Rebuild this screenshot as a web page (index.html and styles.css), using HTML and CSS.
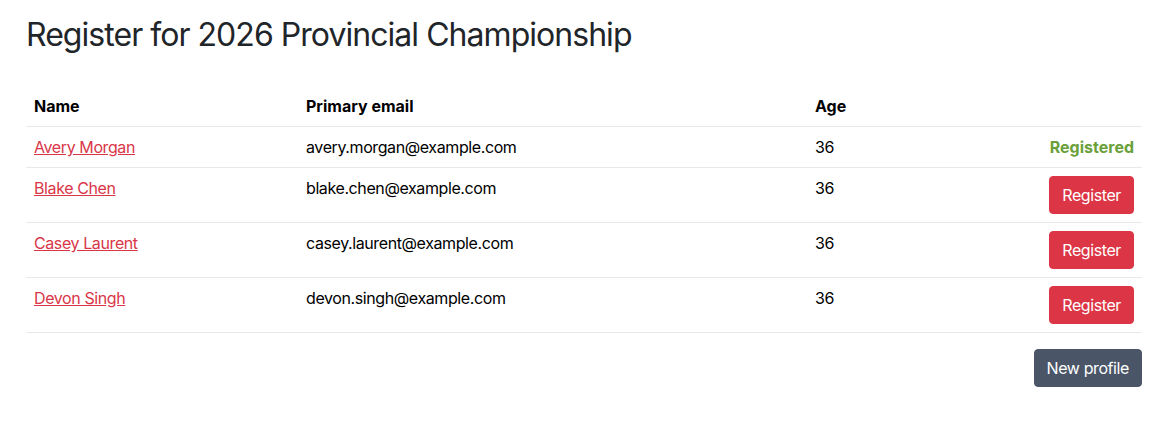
FILE: index.html
```html
<!DOCTYPE html>
<html lang="en">
<head>
    <meta charset="UTF-8">
    <meta name="viewport" content="width=device-width, initial-scale=1.0">
    <title>Register</title>
    <link rel="stylesheet" href="styles.css">
</head>
<body>
    <div class="container">
        <h1>Register for 2026 Provincial Championship</h1>
        <table class="table">
            <thead>
                <tr>
                    <th class="col-name">Name</th>
                    <th class="col-email">Primary email</th>
                    <th class="col-age">Age</th>
                    <th></th>
                </tr>
            </thead>
            <tbody>
                <tr>
                    <td><a href="#">Avery Morgan</a></td>
                    <td>avery.morgan@example.com</td>
                    <td>36</td>
                    <td class="action"><span class="registered">Registered</span></td>
                </tr>
                <tr>
                    <td><a href="#">Blake Chen</a></td>
                    <td>blake.chen@example.com</td>
                    <td>36</td>
                    <td class="action"><button class="btn btn-danger">Register</button></td>
                </tr>
                <tr>
                    <td><a href="#">Casey Laurent</a></td>
                    <td>casey.laurent@example.com</td>
                    <td>36</td>
                    <td class="action"><button class="btn btn-danger">Register</button></td>
                </tr>
                <tr>
                    <td><a href="#">Devon Singh</a></td>
                    <td>devon.singh@example.com</td>
                    <td>36</td>
                    <td class="action"><button class="btn btn-danger">Register</button></td>
                </tr>
            </tbody>
        </table>
        <div class="footer-actions">
            <button class="btn btn-slate">New profile</button>
        </div>
    </div>
</body>
</html>
```

FILE: styles.css
```css
body {
    margin: 0;
    font-family: Inter, "Noto Sans", sans-serif;
    font-size: 16px;
    line-height: 1.5;
    letter-spacing: -0.025em;
    color: #000;
    background: #fff;
}
.container {
    padding: 16px 30px 0 26px;
}
h1 {
    margin: 0 0 32px;
    font-size: 32px;
    font-weight: 400;
    line-height: 1.2;
    letter-spacing: -0.03em;
    color: #212529;
}
.table {
    width: 100%;
    border-collapse: collapse;
    margin-bottom: 16px;
}
.table th,
.table td {
    padding: 8px;
    text-align: left;
    vertical-align: top;
    border-bottom: 1px solid #e6e8ea;
}
.table th {
    font-weight: 700;
    letter-spacing: 0;
}
.col-name {
    width: 256px;
}
.col-email {
    width: 493px;
}
.col-age {
    width: 160px;
}
.table td.action {
    text-align: right;
}
a {
    color: #d93648;
    text-decoration: underline;
}
.registered {
    color: #6a9f3a;
    font-weight: 700;
    letter-spacing: 0;
}
.btn {
    display: inline-block;
    padding: 6px 12px;
    font-family: inherit;
    font-size: 16px;
    line-height: 1.5;
    letter-spacing: inherit;
    color: #fff;
    border: 1px solid transparent;
    border-radius: 4px;
    cursor: pointer;
}
.btn-danger {
    background-color: #dc3545;
    border-color: #dc3545;
}
.btn-slate {
    background-color: #4a5568;
    border-color: #4a5568;
}
.footer-actions {
    display: flex;
    justify-content: flex-end;
}
```
